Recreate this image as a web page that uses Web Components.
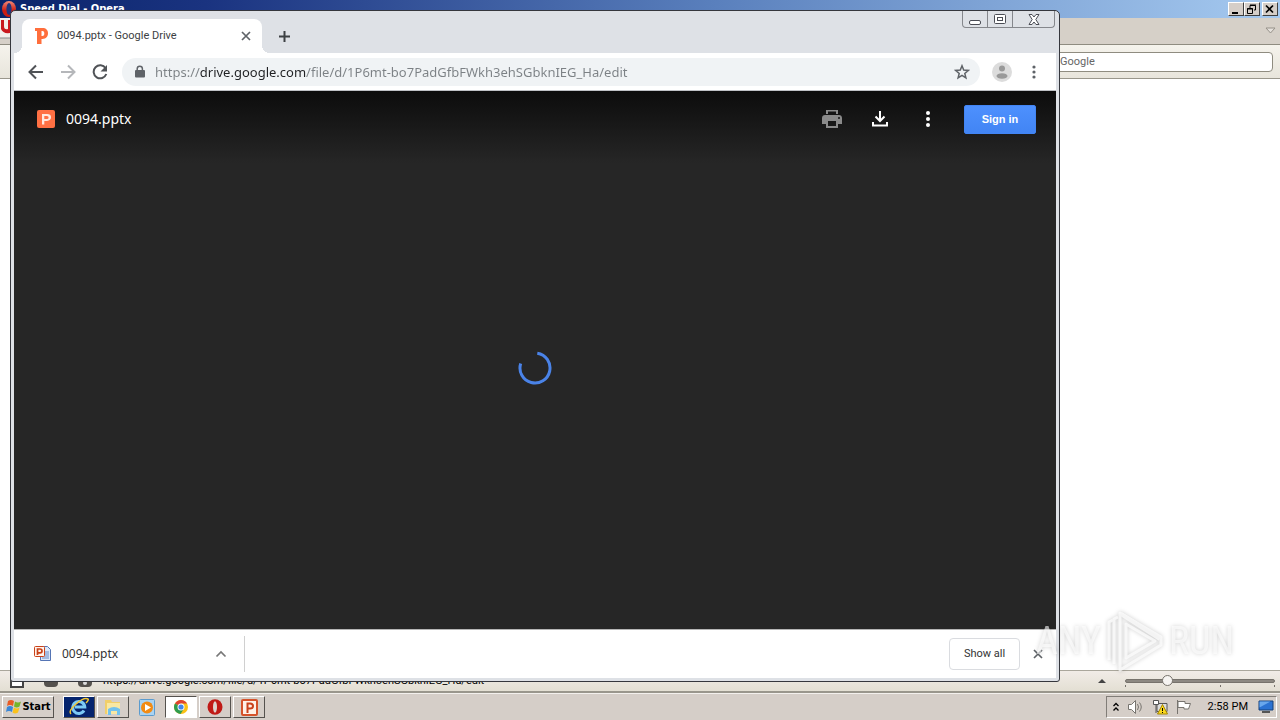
<!DOCTYPE html>
<html lang="en">
<head>
<meta charset="utf-8">
<title>Desktop</title>
<style>
html,body{margin:0;height:100%}
body{font-family:Roboto,"Liberation Sans",sans-serif;font-size:11px;line-height:16px;color:#000;overflow:hidden}
</style>
</head>
<body>
<desk-top>
  <opera-window slot="back" heading="Speed Dial - Opera" status="https://drive.google.com/file/d/1P6mt-bo7PadGfbFWkh3ehSGbknIEG_Ha/edit"></opera-window>
  <chrome-window slot="front">
    <tab-strip slot="tabs"><browser-tab>0094.pptx - Google Drive</browser-tab></tab-strip>
    <nav-bar slot="nav" url="https://drive.google.com/file/d/1P6mt-bo7PadGfbFWkh3ehSGbknIEG_Ha/edit"></nav-bar>
    <drive-viewer>0094.pptx</drive-viewer>
    <download-shelf slot="shelf">0094.pptx</download-shelf>
  </chrome-window>
  <water-mark slot="mark"></water-mark>
  <task-bar slot="bar"></task-bar>
</desk-top>

<script>
const base = `:host,*{box-sizing:border-box}button{font:inherit;color:inherit;border:0;background:none;padding:0;margin:0;display:flex;align-items:center;justify-content:center;flex:none}svg{display:block;flex:none}input{font:inherit;margin:0}`;
function define(name, css, html) {
  customElements.define(name, class extends HTMLElement {
    constructor() {
      super();
      const text = typeof html === 'function' ? html(this) : html;
      this.attachShadow({mode: 'open'}).innerHTML = `<style>${base}${css}</style>${text}`;
    }
  });
}

define('desk-top', `
:host{display:grid;grid-template-rows:1fr auto;height:100vh;min-height:400px;position:relative;overflow:hidden}
::slotted([slot=front]){position:absolute;inset:10px 220px 38px 10px}
::slotted([slot=mark]){position:absolute;right:46px;bottom:47px}
`, `<slot name="back"></slot><slot name="bar"></slot><slot name="front"></slot><slot name="mark"></slot>`);

define('opera-window', `
:host{display:flex;flex-direction:column;min-height:0;background:#fff}
.title{display:flex;align-items:center;height:18px;padding:0 2px;gap:4px;background:linear-gradient(90deg,#0a246a,#1a3380 16%,#5a80bd 56%,#a6caf0);color:#fff;font:bold 11px/16px "DejaVu Sans Condensed","DejaVu Sans",sans-serif}
.title span{flex:1}
.ctl{display:flex}
.ctl button{width:16px;height:14px;background:#d5cec8;border:1px solid;border-color:#fff #404040 #404040 #fff}
.ctl button:last-child{margin-left:2px}
.tabs{display:flex;justify-content:space-between;align-items:center;height:27px;padding-right:4px;background:#d6d0c8;border-bottom:1px solid #8f8c80}
.addr{display:flex;justify-content:flex-end;align-items:center;height:34px;padding:0 7px;background:linear-gradient(#f5f3ec,#e8e5dc);border-bottom:1px solid #9a978c}
.addr input{width:220px;height:20px;border:1px solid #8f8c80;border-radius:4px;background:#fff;padding:0 6px;color:#666;font-size:11px}
.page{flex:1}
.status{display:flex;align-items:center;height:23px;padding:0 5px 0 10px;background:linear-gradient(#f1ece7,#e3dfd3);border-top:1px solid #aaa79c;border-bottom:2px solid #99968c}
.status .i{display:flex;gap:20px;width:93px}
.status span{flex:1}
.zoom{display:flex;align-items:center;gap:18px}
input[type=range]{appearance:none;width:150px;height:18px;background:linear-gradient(#77736c,#77736c) 0 13px/1px 2px no-repeat,linear-gradient(#77736c,#77736c) 95px 13px/1px 2px no-repeat,linear-gradient(#77736c,#77736c) 149px 13px/1px 2px no-repeat}
input[type=range]::-webkit-slider-runnable-track{height:4px;background:#8d8982;border:1px solid #77736c;border-radius:2px}
input[type=range]::-webkit-slider-thumb{appearance:none;width:11px;height:11px;margin-top:-5px;border-radius:50%;border:1px solid #77736c;background:#f7f5f2}
`, el => `
<div class="title">
 <svg width="14" height="16" viewBox="0 0 14 16"><defs><linearGradient id="o" x2="0" y2="1"><stop stop-color="#f58a78"/><stop offset=".6" stop-color="#cc1c12"/></linearGradient></defs><ellipse cx="7" cy="8" rx="7" ry="8" fill="url(#o)"/><ellipse cx="7" cy="8" rx="2.600" ry="6" fill="#22357d"/></svg>
 <span>${el.getAttribute('heading')}</span>
 <div class="ctl">
  <button aria-label="Minimize"><svg width="12" height="11"><path d="M2 8h6v2H2z"/></svg></button>
  <button aria-label="Restore"><svg width="12" height="11" fill="none" stroke="#000"><path d="M4 4V1.500h5.500V6H8M4 1h6M1.500 4.500h5v5h-5zM1 5h6"/></svg></button>
  <button aria-label="Close"><svg width="12" height="11" stroke="#000" stroke-width="1.700"><path d="M2 1.500l7 7M9 1.500l-7 7"/></svg></button>
 </div>
</div>
<div class="tabs">
 <svg width="20" height="26"><rect x="-6" y="-6" width="24" height="26" rx="5" fill="#f2efeb" stroke="#888"/><path d="M1 2v9q2 5 9 4V2H8v9Q4 12 4 8V2z" fill="#c9191e"/></svg>
 <svg width="11" height="8"><path d="M1 1h9L5.500 6z" fill="#e5e1dc" stroke="#97928a"/></svg>
</div>
<div class="addr"><input aria-label="Search" value="Google"></div>
<div class="page"></div>
<div class="status">
 <div class="i"><svg width="14" height="16"><path d="M1 1h12v13H1z" fill="#fff" stroke="#444" stroke-width="2"/></svg><svg width="14" height="14"><rect width="14" height="14" rx="4" fill="#55524e"/></svg><svg width="14" height="14"><rect width="14" height="14" rx="4" fill="#55524e"/><circle cx="7" cy="10" r="2" fill="#ddd"/></svg></div>
 <span>${el.getAttribute('status')}</span>
 <div class="zoom"><svg width="10" height="6"><path d="M1 5h8L5 1z" fill="#444"/></svg><input type="range" aria-label="Zoom" min="0" max="100" value="26"></div>
</div>`);

define('chrome-window', `
:host{display:flex;flex-direction:column;background:#dee1e6;border:1px solid #35373d;border-radius:5px 5px 3px 3px;padding:0 3px 3px}
.body{flex:1;display:flex;flex-direction:column;min-height:0}
::slotted(drive-viewer){flex:1}
.ctl{position:absolute;top:0;right:4px;display:flex;border:1px solid #85878c;border-top:0;border-radius:0 0 4px 4px}
.ctl button{width:25px;height:16px;border-right:1px solid #85878c}
.ctl button:last-child{width:41px;border:0}
`, `<slot name="tabs"></slot><slot name="nav"></slot><div class="body"><slot></slot></div><slot name="shelf"></slot>
<div class="ctl">
<button aria-label="Minimize"><svg width="14" height="14"><rect x="1.500" y="8.500" width="11" height="4" rx="1.500" fill="#fff" stroke="#4b4d55"/></svg></button>
<button aria-label="Maximize"><svg width="14" height="12" fill="#fff" stroke="#4b4d55"><rect x="1.500" y="1.500" width="11" height="9" rx="1"/><rect x="4.500" y="4.500" width="5" height="3"/></svg></button>
<button aria-label="Close"><svg width="12" height="11" viewBox="0 0 12 11"><path d="M1 .5h3L6 3 8 .5h3L7.800 5.500 11 10.500H8L6 8l-2 2.500H1L4.200 5.500z" fill="#fff" stroke="#4b4d55"/></svg></button>
</div>`);

define('tab-strip', `:host{display:flex;height:42px;padding:8px 0 0 8px}button{width:28px;height:34px;margin-left:8px}`,
`<slot></slot><button aria-label="New tab"><svg width="13" height="13"><path d="M6.500 1v11M1 6.500h11" stroke="#3c4043" stroke-width="2"/></svg></button>`);

define('browser-tab', `
:host{position:relative;display:flex;align-items:center;width:240px;height:34px;padding:0 10px 0 12px;gap:8px;background:#fff;border-radius:8px 8px 0 0;color:#3c4043;font-size:11px}
:host::before,:host::after{content:"";position:absolute;bottom:0;width:8px;height:8px}
:host::before{left:-8px;background:radial-gradient(circle at 0 0,#dee1e6 8px,#fff 8px)}
:host::after{right:-8px;background:radial-gradient(circle at 100% 0,#dee1e6 8px,#fff 8px)}
span{flex:1;white-space:nowrap}
`, `<svg width="15" height="16" viewBox="0 0 15 16"><path fill="#ff6e3c" fill-rule="evenodd" d="M1 0h7.500C12 0 14 2 14 5.300S12 11 8.500 11H7.500v5H3V3H1zM7.500 3v5h.8C10 8 10.300 7 10.300 5.500S10 3 8.300 3z"/></svg><span><slot></slot></span><button aria-label="Close tab"><svg width="12" height="12"><path d="M2 2l8 8M10 2l-8 8" stroke="#5f6368" stroke-width="1.700"/></svg></button>`);

define('nav-bar', `
:host{display:flex;align-items:center;height:38px;padding:0 12px;background:#fff;border-bottom:1px solid #bfc1c5}
.nav{display:flex;gap:12px}
.nav button{width:20px;height:20px}
.omni{flex:1;display:flex;align-items:center;height:28px;margin:0 12px;padding:0 10px 0 12px;border-radius:14px;background:#f0f3f5}
input{flex:1;min-width:0;height:22px;border:0;margin:0 8px;padding:0 0 0 1px;font-family:"Noto Sans","Open Sans",sans-serif;font-size:13px;color:#7c8185;background:linear-gradient(90deg,#7c8185 46px,#202124 46px 152px,#7c8185 152px);-webkit-background-clip:text;background-clip:text;-webkit-text-fill-color:transparent}
.me{width:20px;height:20px;margin-right:12px}.dots{width:20px;height:20px}
`, el => `<div class="nav">
<button aria-label="Back"><svg width="16" height="16" fill="none" stroke="#505357" stroke-width="2"><path d="M15 8H2M8 1.500L1.500 8 8 14.500"/></svg></button>
<button aria-label="Forward"><svg width="16" height="16" fill="none" stroke="#b5b7ba" stroke-width="2"><path d="M1 8h13M8 1.500L14.500 8 8 14.500"/></svg></button>
<button aria-label="Reload"><svg width="16" height="16"><path d="M13.600 4.200A6.500 6.500 0 1 0 14.300 10" fill="none" stroke="#505357" stroke-width="2"/><path d="M15 1v6.500H8.500z" fill="#505357"/></svg></button></div>
<div class="omni"><svg width="12" height="14"><path d="M3.200 6V3.800a2.600 2.600 0 0 1 5.200 0V6" fill="none" stroke="#5f6368" stroke-width="1.500"/><rect x="1" y="5" width="10" height="7.500" rx="1" fill="#5f6368"/></svg>
<input aria-label="Address" value="${el.getAttribute('url')}">
<button aria-label="Bookmark"><svg width="16" height="16" viewBox="0 0 16 16"><path d="M8 1.800l1.700 4.300 4.600.3-3.500 3 1.100 4.500L8 11.400l-3.900 2.500 1.100-4.500-3.500-3 4.600-.3z" fill="none" stroke="#5f6368" stroke-width="1.500"/></svg></button></div>
<button class="me" aria-label="Profile"><svg width="20" height="20"><circle cx="10" cy="10" r="10" fill="#dcdcdc"/><circle cx="10" cy="6.500" r="3" fill="#999"/><ellipse cx="10" cy="14" rx="5.500" ry="2.800" fill="#999"/></svg></button>
<button class="dots" aria-label="Menu"><svg width="4" height="14" fill="#5f6368"><circle cx="2" cy="2" r="1.600"/><circle cx="2" cy="7" r="1.600"/><circle cx="2" cy="12" r="1.600"/></svg></button>`);

define('drive-viewer', `
:host{display:flex;flex-direction:column;background:#262626;color:#fff}
header{display:flex;align-items:center;height:72px;padding:0 20px 16px 22px;background:linear-gradient(#0c0c0c,#262626)}
.name{flex:1;margin-left:10px;font:14px/16px "Noto Sans","Open Sans",sans-serif}
.act{display:flex;gap:24px;margin-right:24px}.act button{width:24px;height:24px}
.sign{width:72px;height:29px;border:1px solid #4285f4;border-radius:2px;background:linear-gradient(#4d90fe,#4285f4);color:#fff;font:bold 11px/16px "Liberation Sans",Arial,sans-serif}
main{flex:1;display:grid;place-items:center;padding-bottom:56px}
`, `<header><svg width="20" height="20"><rect x="1" y="1" width="18" height="18" rx="2" fill="#ff7043"/><path fill="#ffe8df" fill-rule="evenodd" d="M6 5h5q4 0 4 3.300T11 12H8.300v3.500H6zM8.300 7v3H11q1.600 0 1.600-1.500T11 7z"/></svg><span class="name"><slot></slot></span>
<div class="act"><button aria-label="Print"><svg width="24" height="24" fill="#8a8a8a"><path fill-rule="evenodd" d="M19 8H5c-1.700 0-3 1.300-3 3v6h4v4h12v-4h4v-6c0-1.700-1.300-3-3-3zm-3 11H8v-5h8zm3-7a1 1 0 1 1 0-2 1 1 0 0 1 0 2zM18 3H6v4h12z"/><path d="M8 4.500h8V7H8z" fill="#151515"/></svg></button>
<button aria-label="Download"><svg width="24" height="24"><path d="M12 4v10M7.500 9.500L12 14l4.500-4.500M5 15v3.500h14V15" fill="none" stroke="#fff" stroke-width="2"/></svg></button>
<button aria-label="More actions"><svg width="24" height="24" fill="#fff"><circle cx="12" cy="6" r="2"/><circle cx="12" cy="12" r="2"/><circle cx="12" cy="18" r="2"/></svg></button></div>
<button class="sign">Sign in</button></header>
<main><svg width="34" height="34" role="img" aria-label="Loading"><path d="M19.300 2.200A15 15 0 1 1 2.700 12.500" fill="none" stroke="#4a83e8" stroke-width="3"/></svg></main>`);

define('download-shelf', `
:host{display:flex;align-items:center;height:49px;background:#fff;border-top:1px solid #b5b5b5;color:#333;padding-right:12px}
.item{display:flex;align-items:center;width:231px;height:36px;padding:0 17px 0 20px;border-right:1px solid #d0d0d0}
.item span{flex:1;margin-left:10px;text-align:left;font:12px/16px "Noto Sans","Open Sans",sans-serif}
.all{width:71px;height:32px;margin:0 12px 0 auto;border:1px solid #dadce0;border-radius:4px}
`, `<button class="item"><svg width="18" height="18"><path d="M6.500 1.500h7l3 3v11h-10z" fill="#dbe8fa" stroke="#5575b5"/><path d="M10 7h5M10 9h5M10 11h5M8 13h7" stroke="#6b8cc8"/><rect x=".5" y="1.500" width="10" height="10" rx="1" fill="#fff3ec" stroke="#c94219"/><path d="M3.500 10V4h2.500q2 0 2 1.900t-2 1.900H4" fill="none" stroke="#c94219" stroke-width="1.700"/></svg><span><slot></slot></span><svg width="12" height="8"><path d="M1.500 6.500L6 2l4.500 4.500" fill="none" stroke="#777" stroke-width="1.700"/></svg></button>
<button class="all">Show all</button><button aria-label="Close downloads"><svg width="12" height="12"><path d="M2 2l8 8M10 2l-8 8" stroke="#5f6368" stroke-width="1.700"/></svg></button>`);

define('water-mark', `
:host{display:flex;align-items:center;gap:6px;height:64px;color:rgba(255,255,255,.6);font:400 38px/40px "Roboto Condensed",Roboto,sans-serif;filter:drop-shadow(0 0 2px rgba(0,0,0,.28));pointer-events:none}
`, `<span>ANY</span><svg width="56" height="62" viewBox="0 0 56 62" fill="none" stroke="#fff" stroke-width="3" opacity=".7" stroke-linejoin="round"><path d="M2 50V12l4-2"/><path d="M7 54V9l4-2"/><path d="M13 3l41 24v8L13 60z"/><path d="M19 14l29 17-29 17z"/><path d="M14 4l39 25" stroke-width="4"/></svg><span>RUN</span>`);

define('task-bar', `
:host{display:flex;align-items:center;height:27px;padding:0 3px 0 2px;background:#d5cec8;border-top:1px solid #f3f0ed}
button,.tray{border:1px solid;border-color:#fff #55524e #55524e #fff}
.start{width:52px;height:22px;font:bold 11px/16px "DejaVu Sans Condensed","DejaVu Sans",sans-serif}
.apps{display:flex;gap:2px;margin-left:9px;flex:1}
.apps button{width:32px;height:22px}
.apps .flat{border-color:transparent}.apps .on{background:#fff;border-color:#55524e #fff #fff #55524e}
.apps .ie{background:#05246e}
.tray{display:flex;align-items:center;height:22px;padding:0 2px 0 6px;gap:8px;border-color:#817d78 #fff #fff #817d78}
time{margin:0 2px 0 8px}
`, `<button class="start"><svg width="17" height="16" viewBox="0 0 17 16"><path d="M3 2q3-2 6 0L8 7Q5 5 2 7z" fill="#e95b24"/><path d="M10 2.500q3 2 6 0l-1.500 5q-3 2-5.500 0z" fill="#75b52b"/><path d="M2 8q3-2 6 0l-1 5q-3-2-6 0z" fill="#3b87d7"/><path d="M9 8.500q3 2 5.500 0L13 13.500q-3 2-5.500 0z" fill="#fbc21c"/></svg>Start</button>
<div class="apps">
<button class="ie" aria-label="Internet Explorer"><svg width="22" height="20"><path d="M16 13.500a6 6 0 1 1 .8-3.500H7" fill="none" stroke="#7ccaf5" stroke-width="3"/><path d="M3 17Q0 14 8 7t12-5q1 1-2 4" fill="none" stroke="#f2c633" stroke-width="1.500"/></svg></button>
<button aria-label="Explorer"><svg width="20" height="18"><path d="M2 2h6l1 2h8v12H2z" fill="#f1cf69"/><path d="M4 5h13v11H4z" fill="#f9e8a2"/><path d="M5 17v-6q6-4 12 0v6h-3v-4H8v4z" fill="#72c2ed"/></svg></button>
<button class="flat" aria-label="Media Player"><svg width="16" height="17"><rect x=".5" y=".5" width="15" height="16" rx="1" fill="#a9d3f2" stroke="#5b9bce"/><circle cx="8" cy="8.500" r="6" fill="#f28b13"/><path d="M6 5l6 3.500L6 12z" fill="#fff"/></svg></button>
<button class="on" aria-label="Chrome"><svg width="14" height="14"><circle cx="7" cy="7" r="7" fill="#fbc116"/><path d="M7 7L1 3.400A7 7 0 0 1 13 3.500H7z" fill="#df4332"/><path d="M7 7L1 3.400A7 7 0 0 0 6.500 14L10 8.700z" fill="#2f9c4e"/><circle cx="7" cy="7" r="3.500" fill="#fff"/><circle cx="7" cy="7" r="2.600" fill="#4286ec"/></svg></button>
<button aria-label="Opera"><svg width="16" height="16"><ellipse cx="8" cy="8" rx="7.500" ry="7.800" fill="#c01a16"/><ellipse cx="8" cy="8" rx="2" ry="5.800" fill="#ddd4ce"/></svg></button>
<button aria-label="PowerPoint"><svg width="17" height="17"><rect x="1" y="1" width="15" height="15" rx="1" fill="#fff1e8" stroke="#d5532b" stroke-width="2"/><path d="M6.500 14V4.500H9q3 0 3 2.500T9 9.500H7" fill="none" stroke="#c9421b" stroke-width="2"/></svg></button>
</div>
<div class="tray">
<svg width="6" height="10" fill="none" stroke="#000" stroke-width="1.300"><path d="M.5 4L3 1.500 5.500 4M.5 8.500L3 6l2.500 2.500"/></svg>
<svg width="17" height="16" fill="#fff" stroke="#77746f"><path d="M1.500 5.500h3l4-4v13l-4-4h-3z"/><path d="M10.500 5q2 3 0 6M12.500 3.500q3.500 4.500 0 9" fill="none"/></svg>
<svg width="16" height="16"><path d="M5 4.500h10v8H5z" fill="#ddd" stroke="#555"/><path d="M1.500 1.500h5v4h-5zM4 6v8" fill="#fff" stroke="#555"/><path d="M10.500 5.500L15.500 15h-10z" fill="#fbd91c" stroke="#a58500"/><path d="M10.500 9v3m0 1v1" stroke="#000"/></svg>
<svg width="16" height="16" fill="#fff" stroke="#77746f"><path d="M1.500 1v14M2 2.500h7v2h5.500l-2 5.500H8V8.500H2z"/></svg>
<time>2:58 PM</time>
<svg width="16" height="14"><path d="M1 1h14v9H1z" fill="#2b72d2" stroke="#174078"/><path d="M1.500 1.500h11l-11 6z" fill="#69a7ec"/><path d="M4 12h8" stroke="#555" stroke-width="2"/></svg>
</div>`);
</script>
</body>
</html>
